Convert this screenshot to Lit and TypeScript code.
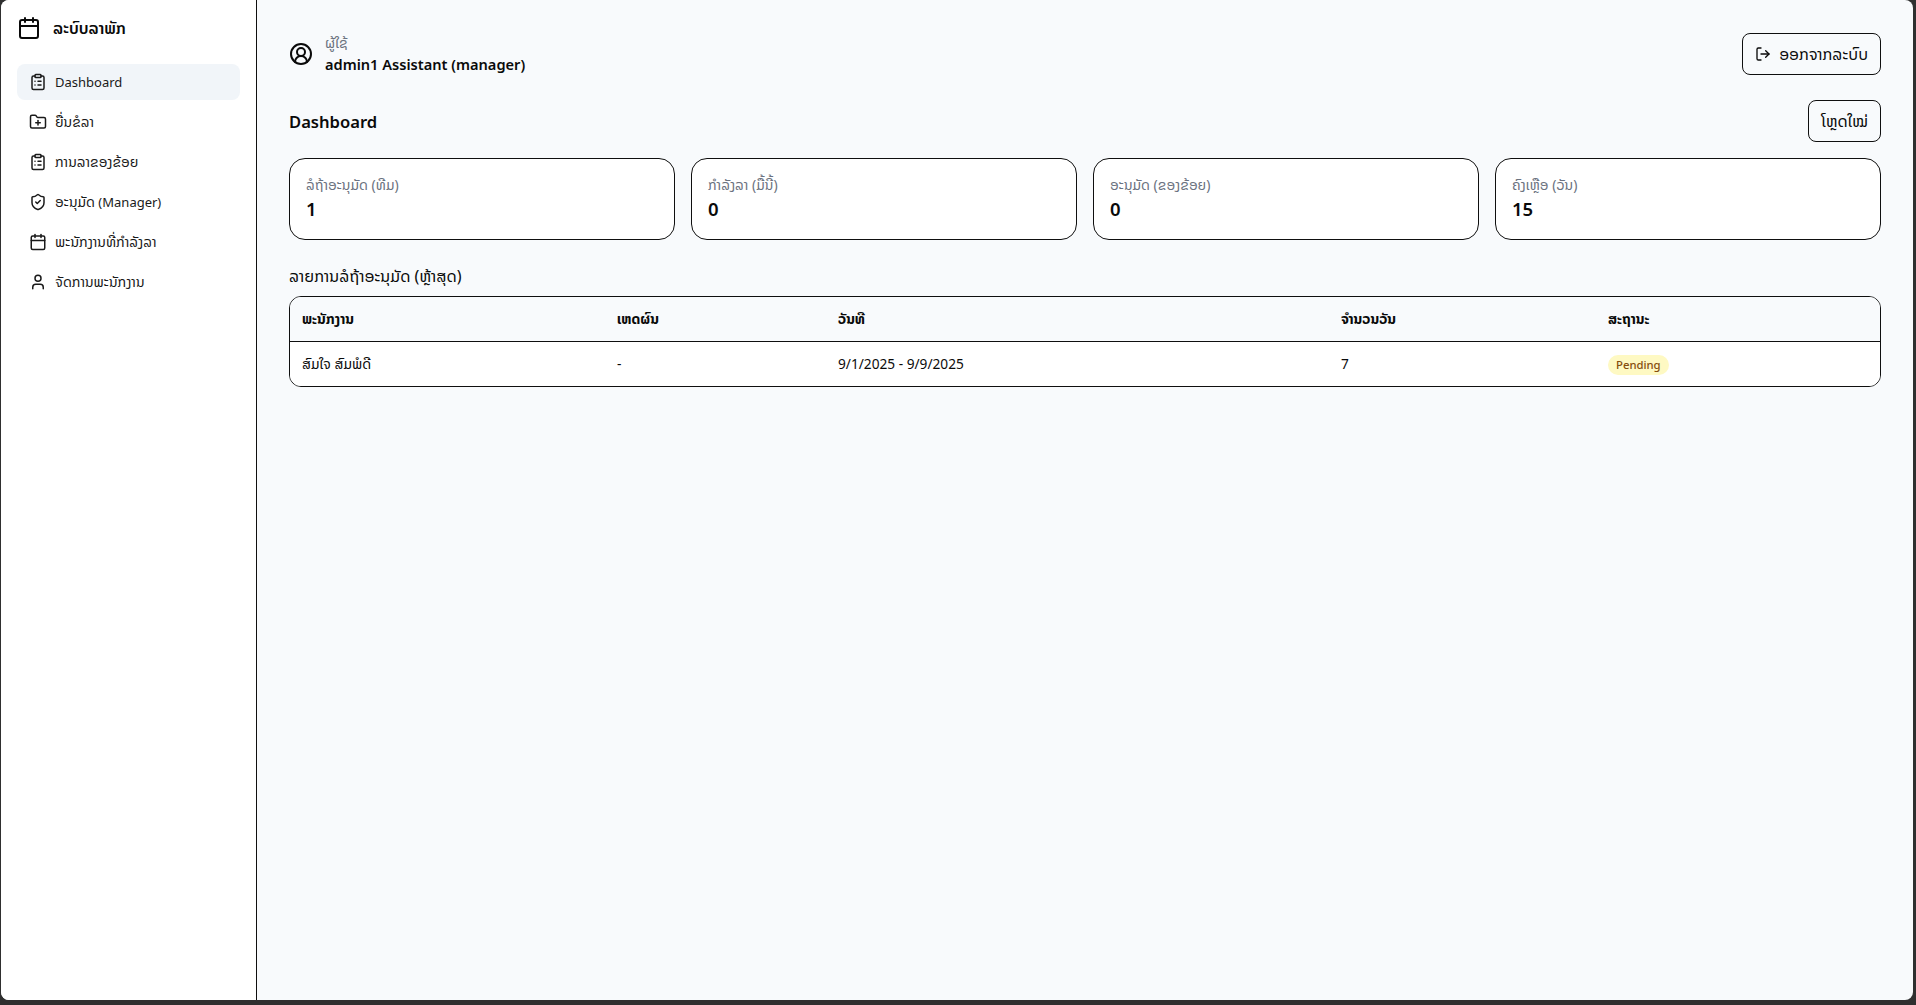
import { LitElement, html, css, svg } from "lit";
import { customElement } from "lit/decorators.js";

const icon = (body: unknown, size = 18, sw = 2) => html`<svg class="ic" width=${size} height=${size} viewBox="0 0 24 24" fill="none" stroke="currentColor" stroke-width=${sw} stroke-linecap="round" stroke-linejoin="round">${body}</svg>`;

const calendar = svg`<path d="M8 2v4"/><path d="M16 2v4"/><rect width="18" height="18" x="3" y="4" rx="2"/><path d="M3 10h18"/>`;
const clipboard = svg`<rect width="8" height="4" x="8" y="2" rx="1"/><path d="M16 4h2a2 2 0 0 1 2 2v14a2 2 0 0 1-2 2H6a2 2 0 0 1-2-2V6a2 2 0 0 1 2-2h2"/><path d="M12 11h4"/><path d="M12 16h4"/><path d="M8 11h.01"/><path d="M8 16h.01"/>`;
const folderPlus = svg`<path d="M12 10v6"/><path d="M9 13h6"/><path d="M20 20a2 2 0 0 0 2-2V8a2 2 0 0 0-2-2h-7.9a2 2 0 0 1-1.69-.9L9.6 3.9A2 2 0 0 0 7.93 3H4a2 2 0 0 0-2 2v13a2 2 0 0 0 2 2Z"/>`;
const shieldCheck = svg`<path d="M20 13c0 5-3.5 7.5-7.66 8.95a1 1 0 0 1-.67-.01C7.5 20.5 4 18 4 13V6a1 1 0 0 1 1-1c2 0 4.5-1.2 6.24-2.72a1.17 1.17 0 0 1 1.52 0C14.51 3.81 17 5 19 5a1 1 0 0 1 1 1z"/><path d="m9 12 2 2 4-4"/>`;
const user = svg`<path d="M19 21v-2a4 4 0 0 0-4-4H9a4 4 0 0 0-4 4v2"/><circle cx="12" cy="7" r="4"/>`;
const userCircle = svg`<path d="M18 20a6 6 0 0 0-12 0"/><circle cx="12" cy="10" r="4"/><circle cx="12" cy="12" r="10"/>`;
const logout = svg`<path d="M9 21H5a2 2 0 0 1-2-2V5a2 2 0 0 1 2-2h4"/><polyline points="16 17 21 12 16 7"/><line x1="21" x2="9" y1="12" y2="12"/>`;

const nav = [
  { label: html`Dashboard`, icon: clipboard, active: true },
  { label: html`<span class="lo">ຍື່ນຂໍລາ</span>`, icon: folderPlus },
  { label: html`<span class="lo">ການລາຂອງຂ້ອຍ</span>`, icon: clipboard },
  { label: html`<span class="lo">ອະນຸມັດ</span> (Manager)`, icon: shieldCheck },
  { label: html`<span class="lo">ພະນັກງານທີ່ກຳລັງລາ</span>`, icon: calendar },
  { label: html`<span class="lo">ຈັດການພະນັກງານ</span>`, icon: user },
];

const stats = [
  { label: "ລໍຖ້າອະນຸມັດ (ທີມ)", value: "1" },
  { label: "ກຳລັງລາ (ມື້ນີ້)", value: "0" },
  { label: "ອະນຸມັດ (ຂອງຂ້ອຍ)", value: "0" },
  { label: "ຄົງເຫຼືອ (ວັນ)", value: "15" },
];

@customElement("app-root")
export class AppRoot extends LitElement {
  static styles = css`
    :host {
      display: block;
      height: 1005px;
      background: #2f2f2f;
      font-family: "Noto Sans", "Noto Sans Lao", sans-serif;
      color: #0a0a0a;
      overflow: hidden;
    }
    .window {
      height: 1000px;
      margin: 0 3px 0 1px;
      display: flex;
      background: #f8fafc;
      border-radius: 8px;
      overflow: hidden;
    }
    .ic { flex: none; display: block; }
    aside {
      width: 255px;
      flex: none;
      background: #fff;
      border-right: 1px solid #0f0f0f;
    }
    .brand {
      display: flex;
      align-items: center;
      gap: 12px;
      height: 56px;
      padding-left: 16px;
      font-size: 16px;
      font-weight: 600;
    }
    .nav { display: flex; flex-direction: column; gap: 4px; padding: 8px 16px; }
    .nav-item {
      display: flex;
      align-items: center;
      gap: 8px;
      height: 36px;
      padding: 0 12px;
      border-radius: 8px;
      font-size: 13px;
      line-height: 20px;
      color: #1a1a1a;
    }
    .nav-item .t { white-space: nowrap; }
    .nav-item .lo { font-size: 14px; }
    .nav-item.active { background: #f1f5f9; }
    main { flex: 1; min-width: 0; padding: 24px 32px; display: flex; flex-direction: column; }
    .top { display: flex; justify-content: space-between; align-items: center; height: 60px; }
    .who { display: flex; align-items: center; gap: 12px; }
    .who small { display: block; font-size: 14px; color: #6b7280; line-height: 18px; }
    .who b { display: block; font-size: 14.6px; font-weight: 600; line-height: 20px; margin-top: 2px; }
    button {
      font: inherit;
      font-size: 16px;
      color: #0a0a0a;
      background: transparent;
      border: 1px solid #0f0f0f;
      border-radius: 8px;
      height: 42px;
      padding: 0 12px;
      display: inline-flex;
      align-items: center;
      gap: 8px;
    }
    .head { display: flex; justify-content: space-between; align-items: center; margin-top: 16px; }
    h1 { margin: 0; font-size: 16.6px; font-weight: 600; }
    .stats { display: grid; grid-template-columns: repeat(4, 1fr); gap: 16px; margin-top: 16px; }
    .card {
      background: #fff;
      border: 1px solid #0f0f0f;
      border-radius: 16px;
      padding: 16px;
      height: 82px;
      box-sizing: border-box;
    }
    .card .l { font-size: 14px; color: #6b7280; line-height: 20px; }
    .card .v { font-size: 18.5px; font-weight: 600; line-height: 28px; margin-top: 0; }
    h2 { margin: 25px 0 9px; font-size: 16.1px; font-weight: 400; line-height: 22px; }
    .table { border: 1px solid #0f0f0f; border-radius: 12px; overflow: hidden; }
    table { width: 100%; border-collapse: collapse; font-size: 14px; line-height: 20px; table-layout: fixed; }
    th { text-align: left; font-weight: 700; height: 44px; padding: 0 12px; border-bottom: 1px solid #0f0f0f; background: #f8fafc; }
    td { height: 44px; padding: 0 12px; background: #fff; }
    .num { font-size: 13.7px; }
    .pill { display: inline-block; background: #fef9c3; color: #854d0e; border-radius: 999px; padding: 0 8px; font-size: 11.3px; font-weight: 500; line-height: 20px; vertical-align: middle; }
  `;

  render() {
    return html`<div class="window">
      <aside>
        <div class="brand">${icon(calendar, 24)}<span>ລະບົບລາພັກ</span></div>
        <nav class="nav">
          ${nav.map((n) => html`<div class="nav-item ${n.active ? "active" : ""}">${icon(n.icon, 18)}<span class="t">${n.label}</span></div>`)}
        </nav>
      </aside>
      <main>
        <div class="top">
          <div class="who">${icon(userCircle, 24)}<div><small>ຜູ້ໃຊ້</small><b>admin1 Assistant (manager)</b></div></div>
          <button>${icon(logout, 16)}<span>ອອກຈາກລະບົບ</span></button>
        </div>
        <div class="head"><h1>Dashboard</h1><button>ໂຫຼດໃໝ່</button></div>
        <div class="stats">
          ${stats.map((s) => html`<div class="card"><div class="l">${s.label}</div><div class="v">${s.value}</div></div>`)}
        </div>
        <h2>ລາຍການລໍຖ້າອະນຸມັດ (ຫຼ້າສຸດ)</h2>
        <div class="table">
          <table>
            <colgroup><col style="width:315px" /><col style="width:221px" /><col style="width:503px" /><col style="width:267px" /><col /></colgroup>
            <thead><tr><th>ພະນັກງານ</th><th>ເຫດຜົນ</th><th>ວັນທີ</th><th>ຈຳນວນວັນ</th><th>ສະຖານະ</th></tr></thead>
            <tbody><tr><td>ສົມໃຈ ສົມພໍດີ</td><td class="num">-</td><td class="num">9/1/2025 - 9/9/2025</td><td class="num">7</td><td><span class="pill">Pending</span></td></tr></tbody>
          </table>
        </div>
      </main>
    </div>`;
  }
}
